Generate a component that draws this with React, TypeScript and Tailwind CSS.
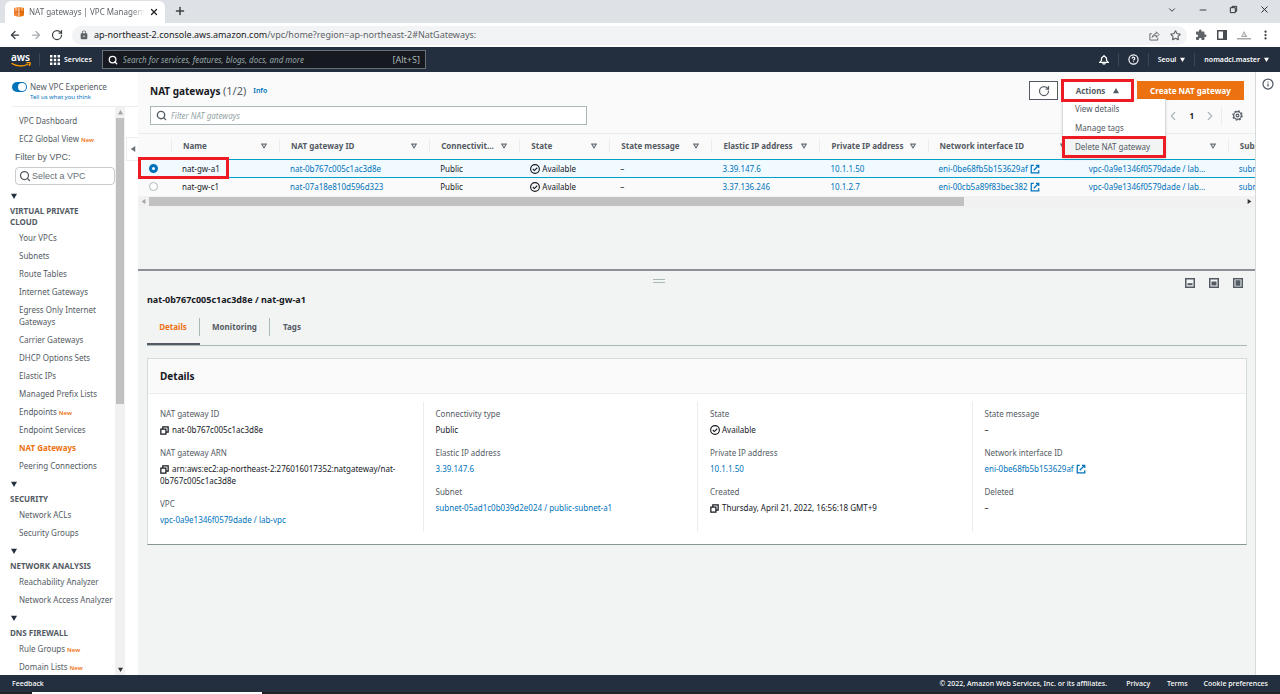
import React from 'react';
import { X, Plus, ArrowLeft, ArrowRight, RotateCw, Search, Star, ChevronDown, ChevronLeft, ChevronRight, Minus, Info, CircleHelp } from 'lucide-react';
import { MdLock, MdExtension } from 'react-icons/md';

interface NavItem {
  label: string;
  isNew?: boolean;
  active?: boolean;
}

interface NavGroup {
  title: string;
  items: NavItem[];
}

const NAV_GROUPS: NavGroup[] = [
  {
    title: 'VIRTUAL PRIVATE CLOUD',
    items: [
      { label: 'Your VPCs' },
      { label: 'Subnets' },
      { label: 'Route Tables' },
      { label: 'Internet Gateways' },
      { label: 'Egress Only Internet Gateways' },
      { label: 'Carrier Gateways' },
      { label: 'DHCP Options Sets' },
      { label: 'Elastic IPs' },
      { label: 'Managed Prefix Lists' },
      { label: 'Endpoints', isNew: true },
      { label: 'Endpoint Services' },
      { label: 'NAT Gateways', active: true },
      { label: 'Peering Connections' },
    ],
  },
  { title: 'SECURITY', items: [{ label: 'Network ACLs' }, { label: 'Security Groups' }] },
  { title: 'NETWORK ANALYSIS', items: [{ label: 'Reachability Analyzer' }, { label: 'Network Access Analyzer' }] },
  { title: 'DNS FIREWALL', items: [{ label: 'Rule Groups', isNew: true }, { label: 'Domain Lists', isNew: true }] },
];

// The VPC heading sits under the open Actions menu, so it carries no text
const COLUMNS = [
  { key: 'name', label: 'Name', width: 'w-[108px]' },
  { key: 'id', label: 'NAT gateway ID', width: 'w-[150px]' },
  { key: 'type', label: 'Connectivit…', width: 'w-[90px]' },
  { key: 'state', label: 'State', width: 'w-[90px]' },
  { key: 'message', label: 'State message', width: 'w-[102px]' },
  { key: 'eip', label: 'Elastic IP address', width: 'w-[108px]' },
  { key: 'ip', label: 'Private IP address', width: 'w-[108px]' },
  { key: 'eni', label: 'Network interface ID', width: 'w-[150px]' },
  { key: 'vpc', label: '', width: 'w-[150px]' },
  { key: 'subnet', label: 'Subnet', width: 'w-[150px]' },
];

const GATEWAYS = [
  { name: 'nat-gw-a1', id: 'nat-0b767c005c1ac3d8e', elasticIp: '3.39.147.6', privateIp: '10.1.1.50', eni: 'eni-0be68fb5b153629af', subnet: 'subnet-05ad1c0b039d2e024' },
  { name: 'nat-gw-c1', id: 'nat-07a18e810d596d323', elasticIp: '3.37.136.246', privateIp: '10.1.2.7', eni: 'eni-00cb5a89f83bec382', subnet: 'subnet-0c1e7b1d20a4f6e11' },
];

const LINK = 'text-[#0073bb]';

const Caret: React.FC<{ dir?: 'down' | 'up' | 'left' | 'right'; className?: string }> = ({ dir = 'down', className }) => {
  const points = { down: '0,1 8,1 4,8', up: '0,7 8,7 4,0', left: '7,0 7,8 1,4', right: '1,0 1,8 7,4' }[dir];
  return (
    <svg viewBox="0 0 8 8" className={`shrink-0 ${className ?? ''}`} fill="currentColor" aria-hidden="true">
      <polygon points={points} />
    </svg>
  );
};

const SortIcon = () => (
  <svg viewBox="0 0 8 8" className="w-[6px] h-[6px] shrink-0" fill="none" stroke="#687078" strokeWidth="1.4" aria-hidden="true">
    <path d="M1 1.5h6L4 6.5z" />
  </svg>
);

const CheckIcon = () => (
  <svg viewBox="0 0 16 16" className="w-[10px] h-[10px] shrink-0" fill="none" stroke="#16191f" strokeWidth="1.8" aria-hidden="true">
    <circle cx="8" cy="8" r="7" />
    <path d="M4.5 8l2.5 2.5L11.5 6" />
  </svg>
);

const ExternalIcon = () => (
  <svg viewBox="0 0 16 16" className="w-[10px] h-[10px] shrink-0" fill="none" stroke="#0073bb" strokeWidth="2" aria-hidden="true">
    <path d="M6 2H2v12h12v-4M9.500 2H14v4.500M14 2L6 10" />
  </svg>
);

const CopyIcon = () => (
  <svg viewBox="0 0 16 16" className="inline-block align-middle mr-[3px] w-[9px] h-[9px] shrink-0" fill="none" stroke="#16191f" strokeWidth="2.200" aria-hidden="true">
    <path d="M1.500 5.500h9v9h-9zM5 5V1.500h9.500V11H11" />
  </svg>
);

const BellIcon = () => (
  <svg viewBox="0 0 16 16" className="h-[10px] w-[10px]" fill="none" stroke="currentColor" strokeWidth="2" aria-hidden="true">
    <path d="M8 1.200L12 5v3.500l2.800 3.300H1.200L4 8.500V5z" />
    <path d="M6 12.500c0 2.800 4 2.800 4 0" />
  </svg>
);

const GearIcon = () => (
  <svg viewBox="0 0 16 16" className="w-[11px] h-[11px]" fill="none" stroke="#545b64" aria-hidden="true">
    <circle cx="8" cy="8" r="5.500" strokeWidth="1.800" />
    <circle cx="8" cy="8" r="6.800" strokeWidth="1.800" strokeDasharray="2.600 2.740" />
    <circle cx="8" cy="8" r="2" strokeWidth="1.700" />
  </svg>
);

const PanelIcon: React.FC<{ inner: React.ReactNode }> = ({ inner }) => (
  <svg viewBox="0 0 10 10" className="w-[10px] h-[10px]" fill="#545b64" aria-hidden="true">
    <path d="M0 0h10v10H0zM1.500 1.500v7h7v-7z" fillRule="evenodd" />
    {inner}
  </svg>
);

const BrowserChrome = () => (
  <div className="text-[#5f6368]">
    <div className="flex h-[23px] items-end bg-[#dee1e6] pl-[5px]">
      <div className="flex h-[22px] w-[160px] items-center rounded-t-md bg-white pl-[9px] pr-[6px]">
        <svg viewBox="0 0 10 10" className="mr-[5px] h-[10px] w-[10px] shrink-0" aria-hidden="true">
          <path d="M0 1l4.600-1v10L0 8.500z" fill="#f58536" />
          <path d="M5.400 0L10 1v7.500L5.400 10z" fill="#e8730c" />
          <path d="M2 .5v3M8 .5v3" stroke="#fff" strokeWidth=".7" />
          <path d="M0 5h10" stroke="#9d5025" strokeWidth=".4" />
        </svg>
        <span className="flex-1 overflow-hidden whitespace-nowrap text-[8px] [mask-image:linear-gradient(to_right,black_88%,transparent)]">NAT gateways | VPC Management Console</span>
        <button type="button" aria-label="Close tab" className="ml-1">
          <X className="h-[10px] w-[10px] text-[#202124]" strokeWidth={3} />
        </button>
      </div>
      <button type="button" aria-label="New tab" className="mb-[6px] ml-[9px]">
        <Plus className="h-[12px] w-[12px] text-[#3c4043]" strokeWidth={3} />
      </button>
      <div className="mb-[8px] ml-auto flex items-center gap-[21px] pr-[10px] text-[#202124]">
        <ChevronDown className="h-[10px] w-[10px]" />
        <Minus className="h-[10px] w-[10px]" />
        <svg viewBox="0 0 10 10" className="h-[9px] w-[9px]" fill="none" stroke="currentColor" aria-hidden="true">
          <path d="M1.500 3h5.500v5.500H1.500zM3.500 3V1.500H8.500V7H7" />
        </svg>
        <X className="h-[11px] w-[11px]" />
      </div>
    </div>
    <div className="flex h-[24px] items-center bg-white pl-[9px] pr-[10px]">
      <div className="flex w-[63px] items-center gap-[9px]">
        <ArrowLeft className="h-[12px] w-[12px] text-[#3c4043]" strokeWidth={2.5} />
        <ArrowRight className="h-[12px] w-[12px] text-[#a8abb0]" strokeWidth={2.5} />
        <RotateCw className="h-[12px] w-[12px] text-[#3c4043]" strokeWidth={2.5} />
      </div>
      <div className="flex h-[19px] flex-1 items-center rounded-full bg-[#f1f3f4] px-[6px]">
        <MdLock className="ml-px mr-[5px] h-[10px] w-[10px]" />
        <span className="flex-1 text-[9px] leading-3">
          <span className="text-[#202124]">ap-northeast-2.console.aws.amazon.com</span>/vpc/home?region=ap-northeast-2#NatGateways:
        </span>
        <svg viewBox="0 0 12 12" className="mr-[10px] h-[11px] w-[11px]" fill="none" stroke="currentColor" aria-hidden="true">
          <path d="M3 4H1v7h8.500V8.500M3.500 8C4 5 6 4 8 4V2l3 3-3 3V6C6 6 4.500 6.500 3.500 8z" />
        </svg>
        <Star className="h-[11px] w-[11px]" strokeWidth={2.5} />
      </div>
      <div className="ml-[8px] flex items-center gap-[10px]">
        <MdExtension className="h-[12px] w-[12px]" />
        <svg viewBox="0 0 10 10" className="h-[10px] w-[10px]" fill="#494c50" aria-hidden="true">
          <path d="M0 0h10v10H0zM1.500 1.500v7H6v-7z" fillRule="evenodd" />
        </svg>
        <svg viewBox="0 0 14 10" className="h-[10px] w-[14px]" fill="#a4a6a8" aria-hidden="true">
          <path d="M4 7l3-6 3.500 6zM0 8h14v1.500H0z" />
          <path d="M5.500 6L7 3l1.500 3z" fill="#e8e8e8" />
        </svg>
        <svg viewBox="0 0 12 12" className="h-[12px] w-[9px]" fill="#3c4043" aria-hidden="true">
          <circle cx="6" cy="1.500" r="1.500" />
          <circle cx="6" cy="6" r="1.500" />
          <circle cx="6" cy="10.500" r="1.500" />
        </svg>
      </div>
    </div>
  </div>
);

const ConsoleHeader = () => (
  <header className="flex h-[25px] items-center bg-[#232f3e] pl-[11px] pr-[11px] text-[7px] font-semibold text-white">
    <a href="#home" className="flex w-[19px] flex-col items-center" aria-label="aws">
      <span className="text-[10px] font-semibold leading-[8px]">aws</span>
      <svg viewBox="0 0 20 5" className="mt-px h-[5px] w-[20px]" fill="none" stroke="#ff9900" strokeWidth="1.400" aria-hidden="true">
        <path d="M.5 1.200c5 3.500 12 3.500 17 .8M15.500.7c1.500-.3 3-.4 3.500.1s-.1 2-.8 3.200" />
      </svg>
    </a>
    <span className="ml-[9px] h-[13px] w-px bg-[#3b4756]" />
    <button type="button" className="ml-[10px] flex items-center gap-[4px]">
      <svg viewBox="0 0 10 10" className="h-[10px] w-[10px]" fill="currentColor" aria-hidden="true">
        <path d="M0 0h2.400v2.400H0zM3.800 0h2.400v2.400H3.800zM7.600 0H10v2.400H7.600zM0 3.800h2.400v2.400H0zM3.800 3.800h2.400v2.400H3.800zM7.600 3.800H10v2.400H7.600zM0 7.600h2.400V10H0zM3.800 7.600h2.400V10H3.800zM7.600 7.600H10V10H7.600z" />
      </svg>
      Services
    </button>
    <label className="ml-[10px] flex h-[19px] w-[324px] items-center border border-[#687078] bg-[#16191f] px-[5px]">
      <Search className="mr-[5px] h-[10px] w-[10px]" strokeWidth={3} />
      <input
        type="text"
        aria-label="Search"
        placeholder="Search for services, features, blogs, docs, and more"
        className="min-w-0 flex-1 text-[8px] font-normal outline-none placeholder:italic placeholder:text-[#95a5a6]"
      />
      <span className="text-[9px] font-normal text-[#aab7b8]">[Alt+S]</span>
    </label>
    <div className="ml-auto flex items-center">
      <button type="button" aria-label="Notifications">
        <BellIcon />
      </button>
      <span className="mx-[9px] h-[13px] w-px bg-[#3b4756]" />
      <button type="button" aria-label="Help">
        <CircleHelp className="h-[11px] w-[11px]" strokeWidth={2.500} />
      </button>
      <span className="mx-[9px] h-[13px] w-px bg-[#3b4756]" />
      <button type="button" className="flex items-center gap-[4px]">
        Seoul <Caret className="h-[5px] w-[5px]" />
      </button>
      <span className="mx-[9px] h-[13px] w-px bg-[#3b4756]" />
      <button type="button" className="flex items-center gap-[4px]">
        nomadcl.master <Caret className="h-[5px] w-[5px]" />
      </button>
    </div>
  </header>
);

const NavLink: React.FC<{ item: NavItem }> = ({ item }) => (
  <a href="#nav" className={`block pl-[19px] ${item.active ? 'font-bold text-[#ec7211]' : ''}`}>
    {item.label}
    {item.isNew && <span className="ml-[2px] text-[6px] font-semibold leading-none text-[#ec7211]">New</span>}
  </a>
);

const Sidebar = () => (
  <aside className="relative flex w-[138px] shrink-0 flex-col bg-white text-[8px] leading-3 text-[#545b64]">
    <div className="ml-3 flex h-[35px] shrink-0 gap-[3px] border-b border-[#eaeded] pt-[9px]">
      <label className="relative mt-px h-[10px] w-[15px]">
        <input type="checkbox" defaultChecked aria-label="New VPC Experience" className="block h-[10px] w-[15px] appearance-none rounded-full bg-[#0073bb]" />
        <span className="pointer-events-none absolute right-px top-px h-[8px] w-[8px] rounded-full bg-white" />
      </label>
      <div>
        <div className="leading-3">New VPC Experience</div>
        <a href="#feedback" className="block text-[6px] leading-[9px] text-[#0073bb]">Tell us what you think</a>
      </div>
    </div>
    <div className="flex min-h-0 flex-1">
      <nav className="h-0 min-h-full w-[115px] overflow-hidden pt-2">
        <div className="flex flex-col gap-[6px]">
          <NavLink item={{ label: 'VPC Dashboard' }} />
          <NavLink item={{ label: 'EC2 Global View', isNew: true }} />
        </div>
        <label htmlFor="vpc-filter" className="mt-[6px] block pl-[15px] font-[Arial,'Liberation_Sans',sans-serif] text-[9px]">Filter by VPC:</label>
        <div className="ml-[15px] mt-1 flex h-[18px] items-center rounded-sm border border-[#c8cccc] pl-[3px]">
          <Search className="mr-px h-[12px] w-[12px]" strokeWidth={2.500} />
          <input id="vpc-filter" type="text" placeholder="Select a VPC" className="w-0 flex-1 font-[Arial,'Liberation_Sans',sans-serif] text-[9px] outline-none placeholder:text-[#687078]" />
        </div>
        {NAV_GROUPS.map((group) => (
          <section key={group.title} className="pt-[5px]">
            <button type="button" aria-label={group.title} className="ml-[11px] flex h-3 items-center text-[#232f3e]">
              <Caret className="h-[6px] w-[6px]" />
            </button>
            <h3 className="mb-[5px] mt-[3px] pl-[10px] pr-6 font-bold leading-[11px]">{group.title}</h3>
            <div className="mb-px flex flex-col gap-[6px]">
              {group.items.map((item) => (
                <NavLink key={item.label} item={item} />
              ))}
            </div>
          </section>
        ))}
      </nav>
      <div className="flex w-[10px] flex-col items-center bg-[#f1f1f1] py-[3px]">
        <Caret dir="up" className="h-[5px] w-[5px] text-[#a3a3a3]" />
        <div className="mt-[3px] h-[286px] w-[8px] bg-[#c1c1c1]" />
        <Caret className="mt-auto h-[5px] w-[5px] text-[#333]" />
      </div>
    </div>
    <button type="button" aria-label="Collapse navigation" className="absolute right-0 top-[65px] flex h-[24px] w-[12px] items-center justify-center border border-r-0 border-[#eaeded] bg-white">
      <Caret dir="left" className="h-[6px] w-[6px] text-[#687078]" />
    </button>
  </aside>
);

const ActionsMenu = () => (
  <div className="relative">
    <button type="button" className="flex h-[19px] w-[69px] items-center justify-center gap-2 border border-[#545b64] bg-white font-bold">
      Actions <Caret dir="up" className="h-[6px] w-[6px]" />
    </button>
    <span className="pointer-events-none absolute -inset-x-[2px] -inset-y-[2px] z-30 border-[3px] border-[#ed1c24]" />
    <ul className="absolute -left-px top-[18px] z-20 w-[104px] border-x border-[#d5dbdb] bg-white font-normal shadow-sm">
      <li>
        <button type="button" className="block h-[19px] w-full pl-3 text-left">View details</button>
      </li>
      <li>
        <button type="button" className="block h-[19px] w-full pl-3 text-left">Manage tags</button>
      </li>
      <li className="-mx-px -mt-px">
        <button type="button" className="block h-[22px] w-full border-[3px] border-[#ed1c24] bg-[#f2f3f3] pl-[10px] text-left">Delete NAT gateway</button>
      </li>
    </ul>
  </div>
);

const GatewayTable = () => (
  <div className="overflow-hidden">
    <table className="w-[1240px] table-fixed border-collapse text-left">
      <thead>
        <tr className="h-[26px] border-t border-[#eaeded] text-[#545b64]">
          <th className="w-[33px]" aria-label="Select" />
          {COLUMNS.map((col) => (
            <th key={col.key} className={`${col.width} p-0 pb-[2px] font-bold`}>
              <div className="flex h-[13px] items-center justify-between border-l border-[#eaeded] pl-[11px] pr-3">
                <span className="whitespace-nowrap">{col.label}</span>
                <SortIcon />
              </div>
            </th>
          ))}
        </tr>
      </thead>
      <tbody>
        {GATEWAYS.map((gw, i) => (
          <tr key={gw.id} className={`h-[18px] *:overflow-hidden *:whitespace-nowrap *:p-0 *:pl-[11px] ${i === 0 ? 'border-y border-[#00a1c9] bg-[#f1faff]' : ''}`}>
            <td>
              <input
                type="radio"
                name="gateway"
                aria-label={gw.name}
                defaultChecked={i === 0}
                className="block h-[9px] w-[9px] appearance-none rounded-full border border-[#aab7b8] bg-white checked:border-[3px] checked:border-[#0073bb]"
              />
            </td>
            <td>{gw.name}</td>
            <td><a href="#gw" className={LINK}>{gw.id}</a></td>
            <td>Public</td>
            <td><span className="flex items-center gap-[2px]"><CheckIcon /> Available</span></td>
            <td>–</td>
            <td><a href="#eip" className={LINK}>{gw.elasticIp}</a></td>
            <td><a href="#ip" className={LINK}>{gw.privateIp}</a></td>
            <td><a href="#eni" className={`flex items-center gap-[2px] ${LINK}`}>{gw.eni} <ExternalIcon /></a></td>
            <td><a href="#vpc" className={LINK}>vpc-0a9e1346f0579dade / lab…</a></td>
            <td><a href="#subnet" className={LINK}>{gw.subnet}</a></td>
          </tr>
        ))}
      </tbody>
    </table>
  </div>
);

const Field: React.FC<{ label: string; children: React.ReactNode }> = ({ label, children }) => (
  <div>
    <dt className="text-[#545b64]">{label}</dt>
    <dd className="mt-1">{children}</dd>
  </div>
);

const DetailsCard = () => (
  <section className="mt-3 border border-[#d5dbdb] border-b-[#879596] bg-white">
    <h2 className="flex h-[35px] items-center border-b border-[#eaeded] bg-[#fafafa] pl-3 text-[10px] font-bold">Details</h2>
    <div className="grid grid-cols-4 pb-3 pt-2 [&>dl]:flex [&>dl]:flex-col [&>dl]:gap-[11px] [&>dl]:py-[6px] [&>dl]:pl-3 [&>dl+dl]:border-l [&>dl+dl]:border-[#eaeded]">
      <dl>
        <Field label="NAT gateway ID"><CopyIcon />nat-0b767c005c1ac3d8e</Field>
        <Field label="NAT gateway ARN"><CopyIcon />arn:aws:ec2:ap-northeast-2:276016017352:natgateway/nat-<br />0b767c005c1ac3d8e</Field>
        <Field label="VPC"><a href="#vpc" className={LINK}>vpc-0a9e1346f0579dade / lab-vpc</a></Field>
      </dl>
      <dl>
        <Field label="Connectivity type">Public</Field>
        <Field label="Elastic IP address"><a href="#eip" className={LINK}>3.39.147.6</a></Field>
        <Field label="Subnet"><a href="#subnet" className={LINK}>subnet-05ad1c0b039d2e024 / public-subnet-a1</a></Field>
      </dl>
      <dl>
        <Field label="State"><span className="flex items-center gap-[2px]"><CheckIcon /> Available</span></Field>
        <Field label="Private IP address"><a href="#ip" className={LINK}>10.1.1.50</a></Field>
        <Field label="Created"><CopyIcon />Thursday, April 21, 2022, 16:56:18 GMT+9</Field>
      </dl>
      <dl>
        <Field label="State message">–</Field>
        <Field label="Network interface ID">
          <a href="#eni" className={`flex items-center gap-[2px] ${LINK}`}>eni-0be68fb5b153629af <ExternalIcon /></a>
        </Field>
        <Field label="Deleted">–</Field>
      </dl>
    </div>
  </section>
);

const App: React.FC = () => (
  <div className="flex min-h-screen flex-col bg-[#f2f3f3] font-['Noto_Sans','Open_Sans',sans-serif] text-[8px] leading-3 text-[#16191f]">
    <BrowserChrome />
    <ConsoleHeader />
    <div className="flex flex-1">
      <Sidebar />
      <main className="min-w-0 flex-1">
        {/* List */}
        <div className="bg-[#fafafa]">
          <div className="flex items-center pl-3 pr-[11px] pt-[9px]">
            <h1 className="text-[10px] font-bold">
              NAT gateways <span className="text-[11px] font-normal text-[#545b64]">(1/2)</span>
            </h1>
            <a href="#info" className="ml-[7px] text-[7px] font-semibold text-[#0073bb]">Info</a>
            <div className="ml-auto flex items-center gap-[5px] text-[#545b64]">
              <button type="button" aria-label="Refresh" className="flex h-[19px] w-[29px] items-center justify-center border border-[#545b64] bg-white">
                <RotateCw className="h-[12px] w-[12px]" strokeWidth={2.500} />
              </button>
              <ActionsMenu />
              <button type="button" className="h-[19px] w-[107px] bg-[#ec7211] font-bold text-white">Create NAT gateway</button>
            </div>
          </div>
          <div className="flex items-center pb-2 pl-3 pr-3 pt-[6px]">
            <label className="flex h-[19px] w-[437px] items-center border border-[#aab7b8] bg-white pl-[5px]">
              <Search className="mr-[4px] h-[11px] w-[11px] text-[#545b64]" strokeWidth={3} />
              <input type="text" aria-label="Filter NAT gateways" placeholder="Filter NAT gateways" className="min-w-0 flex-1 outline-none placeholder:italic placeholder:text-[#95a5a6]" />
            </label>
            <div className="ml-auto flex items-center text-[#545b64]">
              <button type="button" aria-label="Previous page"><ChevronLeft className="h-[14px] w-[14px] text-[#aab7b8]" /></button>
              <span className="mx-[9px] font-bold text-[#16191f]">1</span>
              <button type="button" aria-label="Next page"><ChevronRight className="h-[14px] w-[14px] text-[#aab7b8]" /></button>
              <span className="ml-[4px] mr-[10px] h-[18px] w-px bg-[#eaeded]" />
              <button type="button" aria-label="Preferences"><GearIcon /></button>
            </div>
          </div>
          <div className="relative">
            <GatewayTable />
            <span className="pointer-events-none absolute left-0 top-[24px] h-[22px] w-[91px] border-[3px] border-[#ed1c24]" />
          </div>
        </div>
        <div className="flex h-[12px] items-center bg-[#f1f1f1] px-[3px]">
          <Caret dir="left" className="h-[5px] w-[5px] text-[#a3a3a3]" />
          <div className="ml-[3px] h-[9px] w-[815px] bg-[#c1c1c1]" />
          <Caret dir="right" className="ml-auto h-[5px] w-[5px] text-[#333]" />
        </div>

        {/* Split panel */}
        <div className="mt-[61px] border-t-2 border-[#8d9096] pl-[9px] pr-2">
          <div className="flex items-start pt-[7px]">
            <span className="mx-auto mt-px h-[4px] w-[12px] border-y border-[#aab7b8]" />
            <div className="flex gap-[14px] pl-[14px] pr-[4px]">
              <button type="button" aria-label="Small panel"><PanelIcon inner={<path d="M2.500 5.200h5v2h-5z" />} /></button>
              <button type="button" aria-label="Medium panel"><PanelIcon inner={<path d="M2.500 3.500h5v4h-5z" />} /></button>
              <button type="button" aria-label="Full panel"><PanelIcon inner={<path d="M2.500 2.200h5v5.600h-5z" />} /></button>
            </div>
          </div>
          <h2 className="mt-[6px] text-[9px] font-bold">nat-0b767c005c1ac3d8e / nat-gw-a1</h2>
          <div className="flex h-[40px] items-end border-b border-[#aab7b8] font-bold text-[#545b64]" role="tablist">
            <button type="button" role="tab" aria-selected="true" className="flex h-[27px] items-start border-b-2 border-[#545b64] text-[#ec7211]">
              <span className="flex h-[18px] w-[53px] items-center justify-center border-r border-[#aab7b8]">Details</span>
            </button>
            <button type="button" role="tab" className="mb-[9px] h-[18px] w-[70px] border-r border-[#aab7b8]">Monitoring</button>
            <button type="button" role="tab" className="mb-[9px] h-[18px] w-[44px]">Tags</button>
          </div>
          <DetailsCard />
        </div>
      </main>
      <aside className="flex w-[25px] shrink-0 justify-center border-l border-[#d5dbdb] bg-white pt-[6px]">
        <button type="button" aria-label="Help panel" className="h-[12px]">
          <Info className="h-[12px] w-[12px] text-[#545b64]" strokeWidth={2.500} />
        </button>
      </aside>
    </div>
    <footer className="flex h-[17px] items-center bg-[#232f3e] px-3 text-[7px] font-medium text-white">
      <a href="#feedback">Feedback</a>
      <span className="ml-auto">© 2022, Amazon Web Services, Inc. or its affiliates.</span>
      <a href="#privacy" className="ml-[19px]">Privacy</a>
      <a href="#terms" className="ml-[17px]">Terms</a>
      <a href="#cookies" className="ml-[16px]">Cookie preferences</a>
    </footer>
    <div className="flex h-[2px] bg-[#1d2228]">
      <div className="ml-8 w-[230px] bg-white" />
    </div>
  </div>
);

export default App;
